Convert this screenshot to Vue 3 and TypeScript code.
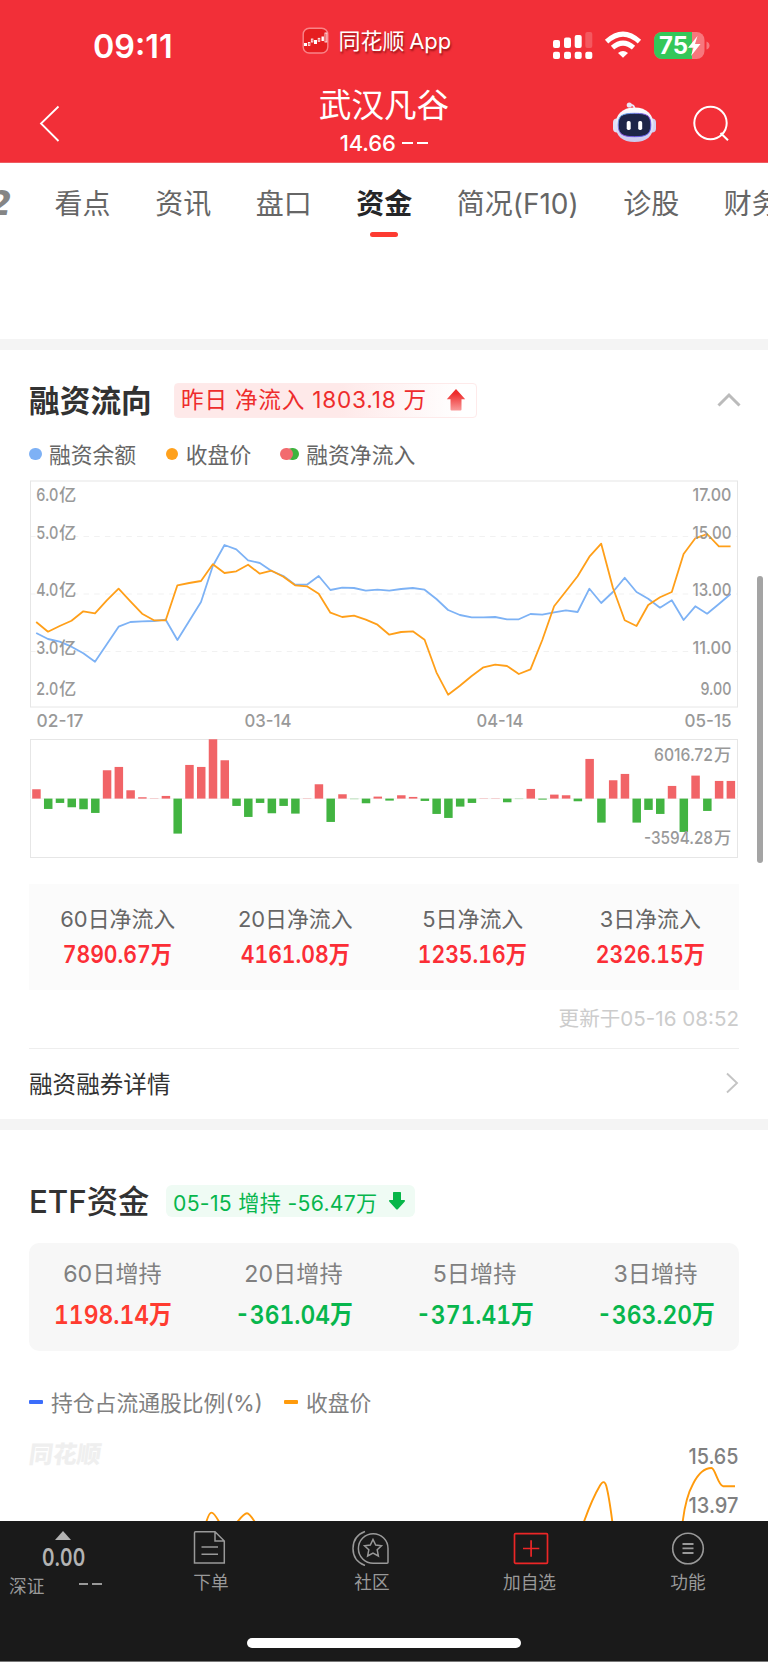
<script setup lang="ts">
interface Stat { label: string; value: string; up: boolean }
interface AxisLabel { num: string; unit?: string; y: number }

const STEP = 11.77
const tabs: string[] = ['看点', '资讯', '盘口', '资金', '简况(F10)', '诊股', '财务']
const activeTab = '资金'

// Vertical positions of the samples, in thirds of a pixel from the chart's top
const price: number[] = [456, 485, 468, 452, 424, 430, 391, 356, 394, 431, 451, 451, 346, 339, 333, 283, 309, 304, 284, 311, 302, 320, 346, 349, 371, 428, 441, 437, 449, 464, 494, 486, 484, 509, 607, 674, 647, 618, 592, 584, 588, 612, 598, 510, 409, 364, 319, 260, 221, 353, 451, 468, 405, 382, 366, 252, 205, 192, 229, 229]
const balance: number[] = [489, 507, 515, 530, 550, 575, 523, 470, 456, 454, 453, 449, 510, 453, 396, 288, 225, 238, 271, 279, 303, 318, 344, 344, 318, 360, 353, 354, 362, 359, 362, 357, 354, 359, 387, 420, 435, 442, 442, 441, 448, 448, 432, 434, 427, 421, 426, 356, 399, 366, 323, 366, 386, 413, 391, 450, 409, 431, 402, 372]
const inflow: number[] = [28, -31, -13, -26, -32, -43, 85, 95, 25, 4, 1, 8, -105, 101, 95, 178, 115, -22, -55, -13, -44, -22, -45, 1, 43, -70, 13, -2, -14, 6, -6, 10, 5, -7, -46, -58, -24, -13, 1, 1, -11, -1, 29, -3, 12, 10, -8, 119, -72, 55, 74, -72, -34, -46, 38, -100, 69, -37, 53, 53]

const toPoints = (v: number[]): string => v.map((y, i) => `${(36.2 + i * STEP).toFixed(1)},${(y / 3).toFixed(1)}`).join(' ')
const bars = inflow.map((v, i) => {
  const h = Math.max(Math.abs(v) / 3, 0.5)
  return { x: 32.2 + i * STEP, y: v > 0 ? 68.6 - h : 68.6, h, up: v > 0, faint: Math.abs(v) < 3 }
})

const leftAxis: AxisLabel[] = [
  { num: '6.0', unit: '亿', y: 31 }, { num: '5.0', unit: '亿', y: 69 }, { num: '4.0', unit: '亿', y: 126.4 },
  { num: '3.0', unit: '亿', y: 183.8 }, { num: '2.0', unit: '亿', y: 225 },
]
const rightAxis: AxisLabel[] = [
  { num: '17.00', y: 31 }, { num: '15.00', y: 69 }, { num: '13.00', y: 126.4 }, { num: '11.00', y: 183.8 }, { num: '9.00', y: 225 },
]
const dates = [{ t: '02-17', x: 36.5 }, { t: '03-14', x: 244.5 }, { t: '04-14', x: 476.5 }, { t: '05-15', x: 684.5 }]

const flowStats: Stat[] = [
  { label: '60日净流入', value: '7890.67万', up: true },
  { label: '20日净流入', value: '4161.08万', up: true },
  { label: '5日净流入', value: '1235.16万', up: true },
  { label: '3日净流入', value: '2326.15万', up: true },
]
const etfStats: Stat[] = [
  { label: '60日增持', value: '1198.14万', up: true },
  { label: '20日增持', value: '-361.04万', up: false },
  { label: '5日增持', value: '-371.41万', up: false },
  { label: '3日增持', value: '-363.20万', up: false },
]
</script>

<template>
  <div class="screen">
    <header class="header">
      <div class="status">
        <span class="time">09:11</span>
        <span class="app">
          <svg width="28" height="28" viewBox="0 0 28 28">
            <rect x="1.2" y="1.2" width="24.6" height="24.8" rx="6" fill="#e61e20" stroke="#f98488" stroke-width="1.4" />
            <g fill="#fff"><rect x="2" y="16" width="3" height="3" /><rect x="12" y="13" width="3" height="4" /><rect x="19.5" y="9.5" width="2.4" height="4.5" /></g>
            <g fill="none" stroke="#fff" stroke-width=".8"><rect x="6.3" y="15.5" width="1.6" height="3" /><rect x="9.3" y="12" width="1.6" height="3" /><rect x="16.2" y="11.3" width="1.6" height="3" /><rect x="23" y="6" width="1.8" height="9" /></g>
          </svg>
          <span class="app-name">同花顺 App</span>
        </span>
        <svg class="radio" width="160" height="32" viewBox="0 0 160 32">
          <g fill="#fff">
            <rect x="1" y="10" width="7" height="8" rx="2" /><rect x="12" y="7.5" width="7" height="10.5" rx="2" /><rect x="22.7" y="5" width="7" height="13" rx="2" />
            <rect x="33.3" y="2" width="7" height="16" rx="2" opacity=".2" />
            <rect x="1" y="21.7" width="7" height="7.3" rx="2" /><rect x="12" y="21.7" width="7" height="7.3" rx="2" /><rect x="22.7" y="21.7" width="7" height="7.3" rx="2" /><rect x="33.3" y="21.7" width="7" height="7.3" rx="2" />
            <path d="M71 27.8 L66 23 Q71 18.8 76 23 Z" />
          </g>
          <path d="M54.6 11.6 Q71 -3.4 87.4 11.6 M60.5 17.7 Q71 8.6 81.5 17.7" fill="none" stroke="#fff" stroke-width="5" />
          <defs><clipPath id="battery"><rect x="102" y="2" width="50.5" height="27" rx="8" /></clipPath></defs>
          <g clip-path="url(#battery)"><rect x="102" y="2" width="51" height="27" fill="#f7777d" /><rect x="102" y="2" width="38" height="27" fill="#34c759" /></g>
          <path d="M154.5 11.5 q3 1 3 4 q0 3-3 4 z" fill="#f7777d" />
          <text x="107" y="24" class="charge" textLength="29" lengthAdjust="spacingAndGlyphs">75</text>
          <path d="M145.5 6 L136 17.7 H141.5 L139 26 L148.5 14 H143 Z" fill="#fff" />
        </svg>
      </div>
      <div class="nav">
        <svg class="back" width="24" height="40" viewBox="0 0 24 40" fill="none" stroke="#fff" stroke-width="1.8"><path d="M20.5 2.5 L3 19.5 L20.5 37" /></svg>
        <div class="title">
          <h1>武汉凡谷</h1>
          <p>14.66 <i></i><i></i></p>
        </div>
        <svg class="robot" width="46" height="42" viewBox="0 0 46 42">
          <defs>
            <linearGradient id="shell" x1="0" y1="0" x2="0" y2="1"><stop offset="0" stop-color="#fff" /><stop offset="1" stop-color="#c9c8ee" /></linearGradient>
            <linearGradient id="rim" x1="0" y1="0" x2="1" y2="1"><stop offset="0" stop-color="#5cbcf0" /><stop offset=".5" stop-color="#8b4cdd" /><stop offset="1" stop-color="#4f61ee" /></linearGradient>
          </defs>
          <path d="M17 4 Q23 3 22.5 9" fill="none" stroke="#e9e6f7" stroke-width="1.8" /><circle cx="17.3" cy="4" r="2.6" fill="#e9e6f7" />
          <rect x="1" y="17.5" width="8" height="14" rx="4" fill="#dfe0f7" /><rect x="36" y="17.5" width="8" height="14" rx="4" fill="#d0d0f2" />
          <path d="M22.5 6.5 C35 6.5 41.5 14 41.5 24 C41.5 35 34.5 41 22.5 41 C10.5 41 3.5 35 3.5 24 C3.5 14 10 6.5 22.5 6.5 Z" fill="url(#shell)" />
          <path d="M22.5 12.3 C35 12.3 38.8 14.5 38.8 24 C38.8 33.5 34 35.7 22.5 35.7 C11 35.7 6.2 33.5 6.2 24 C6.2 14.5 10 12.3 22.5 12.3 Z" fill="#1d2547" stroke="url(#rim)" stroke-width="1" />
          <rect x="14.7" y="20" width="4" height="9" rx="1.7" fill="#fff" /><rect x="26.2" y="20" width="4" height="9" rx="1.7" fill="#fff" />
        </svg>
        <svg class="search" width="38" height="38" viewBox="0 0 38 38" fill="none" stroke="#fff" stroke-width="2"><circle cx="18.5" cy="18" r="16.2" /><path d="M28.5 28 L36 35.3" /></svg>
      </div>
    </header>

    <nav class="tabs">
      <span class="cut">2</span>
      <span v-for="t in tabs" :key="t" class="tab" :class="{ active: t === activeTab }">{{ t }}</span>
    </nav>
    <div class="band"></div>

    <section class="flow">
      <div class="head">
        <h2>融资流向</h2>
        <span class="badge">昨日 净流入 1803.18 万
          <svg width="20" height="24" viewBox="0 0 20 24">
            <defs><linearGradient id="rise" x1="0" y1="0" x2="0" y2="1"><stop offset=".2" stop-color="#ee2c2c" /><stop offset="1" stop-color="#f99a9a" /></linearGradient></defs>
            <path d="M10 1 L19.2 11.2 H15.5 V21.5 Q15.5 22.5 14.5 22.5 H5.5 Q4.5 22.5 4.5 21.5 V11.2 H.8 Z" fill="url(#rise)" />
          </svg>
        </span>
        <svg class="fold" width="24" height="16" viewBox="0 0 24 16" fill="none" stroke="#bbb" stroke-width="3"><path d="M1.5 13.5 L12 3 L22.5 13.5" /></svg>
      </div>
      <div class="legend">
        <i class="dot blue"></i><span class="first">融资余额</span>
        <i class="dot orange"></i><span class="second">收盘价</span>
        <i class="dot red"></i><i class="dot green"></i><span>融资净流入</span>
      </div>
      <svg class="chart lines" width="768" height="262" viewBox="0 0 768 262">
        <g stroke="#f1f1f1" stroke-width="1" stroke-dasharray="5.5 5.2">
          <path d="M30 66.5 H738 M30 124 H738 M30 181.5 H738" />
        </g>
        <rect x="30.5" y="11" width="707" height="226" fill="none" stroke="#e6e6e6" />
        <polyline :points="toPoints(balance)" fill="none" stroke="#7db2f5" stroke-width="1.8" stroke-linejoin="round" />
        <polyline :points="toPoints(price)" fill="none" stroke="#ff9f19" stroke-width="1.8" stroke-linejoin="round" />
        <g class="axis">
          <template v-for="l in leftAxis" :key="l.num">
            <text x="36.3" :y="l.y" textLength="22" lengthAdjust="spacingAndGlyphs">{{ l.num }}</text><text x="59" :y="l.y">{{ l.unit }}</text>
          </template>
          <text v-for="l in rightAxis" :key="l.num" x="731.5" :y="l.y" text-anchor="end" :textLength="l.num.length > 4 ? 39 : 31" lengthAdjust="spacingAndGlyphs">{{ l.num }}</text>
          <text v-for="d in dates" :key="d.t" :x="d.x" y="256.5" textLength="47" lengthAdjust="spacingAndGlyphs">{{ d.t }}</text>
        </g>
      </svg>
      <svg class="chart columns" width="768" height="130" viewBox="0 0 768 130">
        <rect x="30.5" y="9.5" width="707" height="118" fill="none" stroke="#e6e6e6" />
        <path d="M30 68.6 H738" stroke="#f2f2f2" stroke-width=".8" />
        <rect v-for="(b, i) in bars" :key="i" :x="b.x" :y="b.y" width="8.5" :height="b.h" :fill="b.up ? '#f16467' : '#42b441'" :opacity="b.faint ? 0.5 : 1" />
        <g class="axis">
          <text x="654" y="31" textLength="59" lengthAdjust="spacingAndGlyphs">6016.72</text><text x="714" y="31">万</text>
          <text x="644" y="113.5" textLength="69" lengthAdjust="spacingAndGlyphs">-3594.28</text><text x="714" y="113.5">万</text>
        </g>
      </svg>
      <div class="stats flow-stats">
        <div v-for="s in flowStats" :key="s.label" class="stat">
          <span class="label">{{ s.label }}</span><strong class="value" :class="s.up ? 'up' : 'down'">{{ s.value }}</strong>
        </div>
      </div>
      <p class="updated">更新于05-16 08:52</p>
      <div class="detail">
        <span>融资融券详情</span>
        <svg width="14" height="22" viewBox="0 0 14 22" fill="none" stroke="#c4c4c4" stroke-width="1.9"><path d="M2 1.5 L12 11 L2 20.5" /></svg>
      </div>
    </section>
    <div class="band"></div>

    <section class="etf">
      <div class="head">
        <h2>ETF资金</h2>
        <span class="pill">05-15 增持 -56.47万
          <svg width="18" height="20" viewBox="0 0 18 20"><path d="M5 1.5 Q5 1 5.8 1 H12.2 Q13 1 13 1.5 V9 H16.2 Q17.6 9.2 16.8 10.4 L9.8 18.2 Q9 19 8.2 18.2 L1.2 10.4 Q.4 9.2 1.8 9 H5 Z" fill="#07b649" /></svg>
        </span>
      </div>
      <div class="stats etf-stats">
        <div v-for="s in etfStats" :key="s.label" class="stat">
          <span class="label">{{ s.label }}</span><strong class="value" :class="s.up ? 'up' : 'down'">{{ s.value }}</strong>
        </div>
      </div>
      <div class="legend">
        <i class="dash blue"></i><span class="ratio">持仓占流通股比例(%)</span>
        <i class="dash orange"></i><span>收盘价</span>
      </div>
      <svg class="chart" width="768" height="92" viewBox="0 0 768 92">
        <text class="watermark" transform="translate(28 33) skewX(-8)" textLength="72" lengthAdjust="spacingAndGlyphs">同花顺</text>
        <g class="axis large">
          <text x="688.5" y="34" textLength="50" lengthAdjust="spacingAndGlyphs">15.65</text>
          <text x="688.5" y="83" textLength="50" lengthAdjust="spacingAndGlyphs">13.97</text>
        </g>
        <path d="M206 93 Q209 82.6 211.5 82.6 Q214 82.6 219.8 93 M236.5 93 Q244 83.3 247 83.3 Q249.5 83.3 255.5 93 M583.5 93 Q592 69 600 55.5 Q604 48.5 606.3 56 Q609 66 612.5 93 M682.5 93 C685 72 688 63 693 54 C698 44 705 38 711.5 38 C715 38 718 55 723 56.2 H735" fill="none" stroke="#ff9a0c" stroke-width="1.9" />
      </svg>
    </section>

    <footer class="dock">
      <div class="items">
        <div class="index">
          <svg width="16" height="9" viewBox="0 0 16 9"><path d="M8 0 L16 9 H0 Z" fill="#b3b3b3" /></svg>
          <b>0.00</b>
          <div class="market"><span>深证</span><i></i><i></i></div>
        </div>
        <div class="item">
          <svg width="38" height="36" viewBox="0 0 38 36" fill="none" stroke="#999" stroke-width="1.5"><path d="M4.5 1.7 H24 L33.3 11 V33 H3.5 V2.7 Q3.5 1.7 4.5 1.7 M24 2 V11 H33 M10.5 17 H27 M10.5 24.3 H27" /></svg>
          <span>下单</span>
        </div>
        <div class="item">
          <svg width="38" height="36" viewBox="0 0 38 36" fill="none" stroke="#999" stroke-width="1.5"><path d="M36 18.5 A14.8 14.8 0 1 0 21.2 33.3 H35 Q36 33.3 36 32.3 Z M13 1.5 Q1 6 1 18.5 Q1 31 13 35.5" /><path d="M21 9.5 L23.7 15 L29.5 15.8 L25.2 19.8 L26.4 26 L21 23.2 L15.6 26 L16.8 19.8 L12.5 15.8 L18.3 15 Z" /></svg>
          <span>社区</span>
        </div>
        <div class="item add">
          <svg width="38" height="36" viewBox="0 0 38 36" fill="none" stroke="#ec2627" stroke-width="1.7"><rect x="2.5" y="3.7" width="33" height="29.6" rx="1" /><path d="M11 18.5 H27.3 M19.1 10.3 V26.7" /></svg>
          <span>加自选</span>
        </div>
        <div class="item menu">
          <svg width="38" height="36" viewBox="0 0 38 36" fill="none" stroke="#999" stroke-width="1.6"><circle cx="19" cy="18.5" r="15.3" /><path d="M13.5 14 H24.5 M13.5 18.4 H24.5 M13.5 23 H24.5" stroke-width="1.9" /></svg>
          <span>功能</span>
        </div>
      </div>
      <div class="home"></div>
    </footer>
    <div class="scrollbar"></div>
  </div>
</template>

<style>
body { margin: 0; background: #fff; }
</style>

<style scoped>
.screen { position: relative; width: 768px; height: 1662px; overflow: hidden; background: #fff; display: flex; flex-direction: column; font-family: Inter, "Noto Sans CJK SC", sans-serif; color: #323232; white-space: nowrap; }
.screen > * { flex: none; box-sizing: border-box; }
h1, h2, p { margin: 0; font-weight: 400; }
svg { display: block; flex: none; }
i { font-style: normal; }

.header { height: 163px; background: #f22f38; color: #fff; border-bottom: 1px solid #ee5c61; }
.status { display: flex; height: 82px; }
.time { width: 208.5px; padding-left: 93px; font-size: 32.3px; font-weight: 600; line-height: 93px; letter-spacing: 0; }
.app { display: flex; width: 250px; gap: 9px; padding-top: 27px; }
.app-name { font-size: 22px; line-height: 28px; text-shadow: 1px 2px 2px rgba(90, 0, 0, .6); word-spacing: -1.5px; }
.radio { margin-top: 30px; }
.charge { font: 700 24px Inter, sans-serif; fill: #fff; }
.nav { display: flex; height: 80px; }
.back { margin: 22px 0 0 38px; }
.title { width: 200px; margin-left: 222px; text-align: center; }
.title h1 { font-size: 32.6px; line-height: 46px; }
.title p { font-size: 22px; font-weight: 500; line-height: 26px; margin-top: 2px; display: flex; justify-content: center; align-items: center; gap: 4.8px; letter-spacing: -.1px; }
.title i { width: 11px; height: 2.6px; background: #fff; margin-left: 1px; }
.title i + i { margin-left: 0; }
.robot { margin: 18.5px 0 0 127.5px; }
.search { margin: 22.5px 0 0 34.5px; }

.tabs { display: flex; height: 176px; gap: 44.5px; align-items: flex-start; overflow: hidden; }
.cut { width: 12px; margin-right: -1.9px; font: italic 700 34px/81px "DejaVu Sans", sans-serif; color: #858585; display: flex; justify-content: flex-end; }
.tab { position: relative; font-size: 28px; line-height: 83px; color: #666; flex: none; }
.tab.active { color: #252628; font-weight: 600; }
.tab.active::after { content: ""; position: absolute; left: 14px; top: 68.5px; width: 28px; height: 5.5px; border-radius: 3px; background: #fd3b31; }
.band { height: 11px; background: #f4f4f4; }

.flow { height: 769px; display: flex; flex-direction: column; }
.flow > *, .etf > * { flex: none; box-sizing: border-box; }
.head { display: flex; align-items: center; }
.head h2 { font-size: 30.7px; font-weight: 600; color: #323232; }
.flow .head { height: 50px; margin-top: 25px; padding-left: 29px; }
.flow h2 { width: 145px; margin-top: -4px; }
.badge { width: 303px; height: 35px; box-sizing: border-box; display: flex; align-items: center; justify-content: space-between; padding: 0 10px 0 6px; border: 1px solid #feeaea; border-radius: 4px; font-size: 22.6px; line-height: 30px; letter-spacing: .8px; color: #ee2c2c; background: linear-gradient(90deg, #fee9e9 0%, #fee9e9 55%, #fff 95%); }
.fold { margin-left: 240px; }
.legend { display: flex; align-items: center; color: #666; font-size: 21.8px; }
.flow .legend { height: 40px; margin-top: 8.5px; padding-left: 29px; }
.dot { width: 12.6px; height: 12.6px; border-radius: 50%; margin-right: 7.3px; margin-top: 1px; }
.dot.blue { background: #7eb1f5; }
.dot.orange { background: #ffa11c; }
.dot.red { background: #f26b6f; margin-right: 0; position: relative; z-index: 1; }
.dot.green { background: #3fb33f; margin-left: -6.5px; }
.first { width: 117px; }
.second { width: 94.5px; }
.lines { margin-top: -3.5px; }
.columns { margin-top: -2px; }
.axis text { font: 500 17.3px Inter, "Noto Sans CJK SC", sans-serif; fill: #999; }
.axis.large text { font-size: 21.5px; fill: #808080; }
.watermark { font: 900 24px "Noto Sans CJK SC", sans-serif; fill: #efefef; }

.stats { width: 710px; margin-left: 29px; display: grid; justify-content: center; }
.stat { display: flex; flex-direction: column; align-items: center; }
.value { font-weight: 600; font-variant-numeric: tabular-nums; transform: scaleX(.89); }
.flow-stats { height: 105.5px; margin-top: 24px; background: #fbfbfb; grid-template-columns: repeat(4, 177.5px); }
.flow-stats .stat { padding-top: 19px; }
.flow-stats .label { font-size: 21.9px; line-height: 32px; color: #666; }
.flow-stats .value { font-size: 23.8px; line-height: 40px; }
.up { color: #fb2e36; }
.down { color: #07b64d; }
.updated { height: 58px; padding-right: 29px; text-align: right; font-size: 20.6px; line-height: 57px; color: #ccc; }
.detail { height: 70px; margin: 0 29px; border-top: 1.5px solid #eee; display: flex; align-items: center; justify-content: space-between; font-size: 23.6px; color: #323232; }

.etf { height: 391px; overflow: hidden; }
.etf .head { height: 44px; margin-top: 49px; padding-left: 29px; }
.etf h2 { width: 137px; font-size: 31.3px; font-weight: 500; margin-top: -4px; }
.pill { width: 249px; height: 32px; box-sizing: border-box; display: flex; align-items: center; justify-content: space-between; padding: 0 9px 0 7px; border-radius: 6px; background: #effbf4; color: #07b64d; font-size: 21.2px; letter-spacing: .3px; }
.etf-stats { height: 107.5px; margin-top: 20px; border-radius: 10px; background: #f7f7f7; grid-template-columns: repeat(4, 181px); }
.etf-stats .stat { padding-top: 15px; }
.etf-stats .label { font-size: 23.2px; line-height: 32px; color: #808080; }
.etf-stats .value { font-size: 26px; line-height: 49px; transform: scaleX(.88); }
.etf-stats .up { color: #ff3b30; }
.etf .legend { height: 40px; margin-top: 30.5px; padding-left: 29px; color: #808080; }
.dash { width: 14px; height: 4px; margin-right: 8px; margin-top: 1px; border-radius: 1px; }
.dash.blue { background: #3b6dfb; }
.dash.orange { background: #ff9b0c; }
.ratio { width: 233px; }
.etf .chart { margin-top: 9px; }

.dock { height: 141px; background: #1a1a1a; border-bottom: 1px solid #777; color: #999; position: relative; }
.items { display: grid; grid-template-columns: 130px 160px 162px 158px 156px; height: 117px; }
.item { display: flex; flex-direction: column; align-items: center; font-size: 17.7px; padding-top: 9px; line-height: 33px; }
.item span { padding-left: 2px; }
.item.add span { padding: 0 3px 0 0; }
.item.menu span { padding: 0; }
.index { display: flex; flex-direction: column; padding-top: 10px; }
.index > svg { margin-left: 55px; }
.index b { margin-left: 42px; font-size: 24px; line-height: 35px; font-weight: 600; color: #b3b3b3; transform: scaleX(.79); transform-origin: left; letter-spacing: .3px; }
.market { display: flex; align-items: center; gap: 4px; margin-left: 9px; height: 20px; font-size: 17.7px; }
.market span { width: 66px; }
.market i { width: 9.3px; height: 2px; background: #999; margin-top: -2px; }
.home { width: 274px; height: 9.5px; margin: 0 auto; border-radius: 5px; background: #fff; }
.scrollbar { position: absolute; left: 757px; top: 576px; width: 5.5px; height: 287px; border-radius: 3px; background: #a4a4a4; }
</style>
